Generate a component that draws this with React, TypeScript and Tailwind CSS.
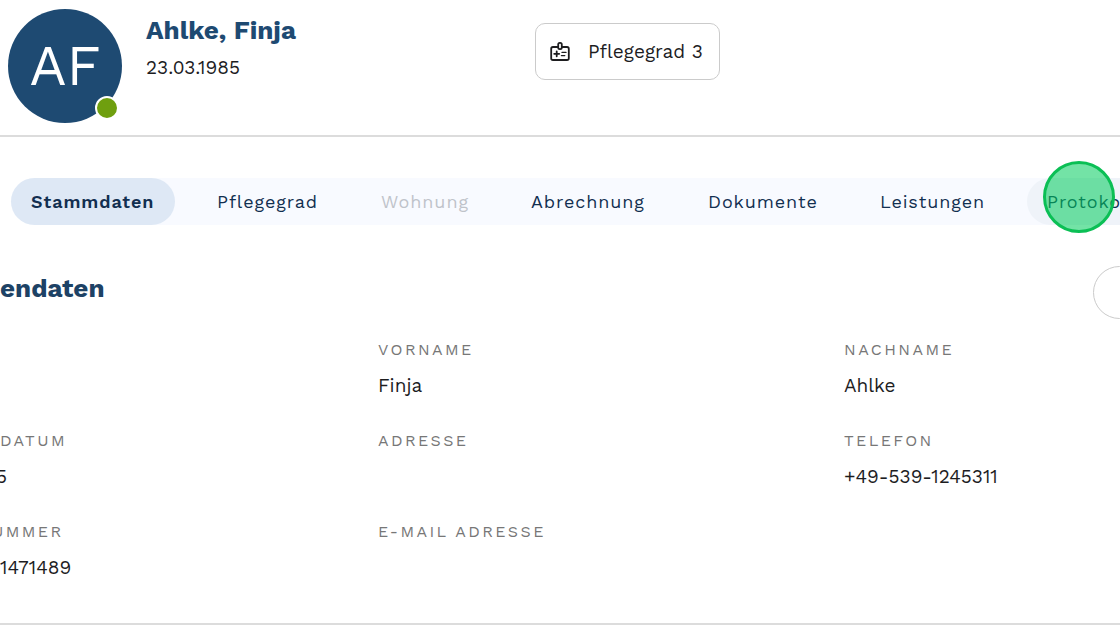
import { clsx } from "clsx";

type Tab = { label: string; width: string; active?: boolean; disabled?: boolean; hovered?: boolean };

const tabs: Tab[] = [
  { label: "Stammdaten", width: "w-[164px]", active: true },
  { label: "Pflegegrad", width: "w-[142px]" },
  { label: "Wohnung", width: "w-[128px]", disabled: true },
  { label: "Abrechnung", width: "w-[155px]" },
  { label: "Dokumente", width: "w-[150px]" },
  { label: "Leistungen", width: "w-[145px]" },
  { label: "Protokolle", width: "w-[142px]", hovered: true },
];

const fields = [
  { label: "", value: "" },
  { label: "VORNAME", value: "Finja" },
  { label: "NACHNAME", value: "Ahlke" },
  { label: "DATUM", value: "5", cutValue: true },
  { label: "ADRESSE", value: "" },
  { label: "TELEFON", value: "+49-539-1245311" },
  { label: "UMMER", value: "1471489", cutLabel: true },
  { label: "E-MAIL ADRESSE", value: "" },
];

function CareIcon() {
  return (
    <svg className="size-6" viewBox="0 0 24 24" fill="none" stroke="currentColor" strokeWidth="1.8" strokeLinecap="round" strokeLinejoin="round" aria-hidden="true">
      <path d="M9.7 7H5a1.8 1.8 0 0 0-1.8 1.8v9.4A1.8 1.8 0 0 0 5 20h14a1.8 1.8 0 0 0 1.8-1.8V8.8A1.8 1.8 0 0 0 19 7h-4.7" />
      <rect x="10.2" y="2.8" width="3.6" height="6.4" rx="1.6" />
      <path d="M6.2 13.8h5M8.7 11.3v5" />
      <path d="M14 12.4h4M13.4 15.6h3.4" strokeWidth="1.3" />
    </svg>
  );
}

export default function App() {
  return (
    <div className="overflow-hidden bg-white font-['Work_Sans',Inter,sans-serif] text-[#1d1d1f]">
      {/* Client header */}
      <header className="flex h-[137px] items-start border-b-2 border-[#dcdcdc] pl-2">
        <div className="relative mt-[9px] flex size-[114px] shrink-0 items-center justify-center rounded-full bg-[#1e4a72] text-[56px] text-white">
          AF
          <span className="absolute right-[3px] bottom-[3px] size-6 rounded-full border-2 border-white bg-[#6f9f0f]" />
        </div>
        <div className="ml-6 w-[389px] pt-3">
          <h1 className="text-[26px] leading-9 font-bold text-[#1e4a72]">Ahlke, Finja</h1>
          <p className="mt-1 text-[19px] leading-8">23.03.1985</p>
        </div>
        <div className="mt-[23px] flex h-[57px] shrink-0 items-center gap-4 rounded-[10px] border border-[#cbcbcb] pr-4 pl-3 text-[19px]">
          <CareIcon />
          <span className="pt-0.5">Pflegegrad 3</span>
        </div>
      </header>

      {/* Tabs */}
      <nav className="relative mt-[41px] ml-[11px] flex h-[47px] gap-[22px] rounded-l-full bg-[#f8faff]">
        {tabs.map((tab) => (
          <button
            key={tab.label}
            type="button"
            disabled={tab.disabled}
            className={clsx(
              "shrink-0 rounded-full px-5 text-left text-lg tracking-wider whitespace-nowrap",
              tab.width,
              tab.active && "bg-[#dee8f5] font-semibold",
              tab.hovered && "bg-[#eff3f9]",
              tab.disabled ? "text-[#bfc3ca]" : "text-[#122f50]"
            )}>
            {tab.label}
          </button>
        ))}
        {/* Click marker */}
        <span className="pointer-events-none absolute -top-[17px] left-[1032px] size-[72px] rounded-full border-[3px] border-[#0bbf55] bg-[#00cc5c]/55" />
      </nav>

      {/* Master data */}
      <section className="border-b-2 border-[#dcdcdc] pb-[33px]">
        <div className="flex h-[107px] items-start justify-between pt-[41px]">
          <h2 className="text-[26px] leading-[44px] font-bold text-[#1d4265]">endaten</h2>
          <button type="button" aria-label="Bearbeiten" className="-mr-[52px] h-[53px] w-[79px] rounded-full border border-[#cbcbcb]" />
        </div>
        <dl className="grid grid-cols-[378fr_466fr_276fr] gap-y-[15px]">
          {fields.map((field, i) => (
            <div key={i} className="h-[76px] whitespace-nowrap">
              <dt className={clsx("h-9 text-base leading-9 tracking-[0.15em] text-[#777777]", field.cutLabel && "-ml-2")}>{field.label}</dt>
              <dd className={clsx("text-[19px] leading-9", field.cutValue && "-ml-1")}>{field.value}</dd>
            </div>
          ))}
        </dl>
      </section>
    </div>
  );
}
